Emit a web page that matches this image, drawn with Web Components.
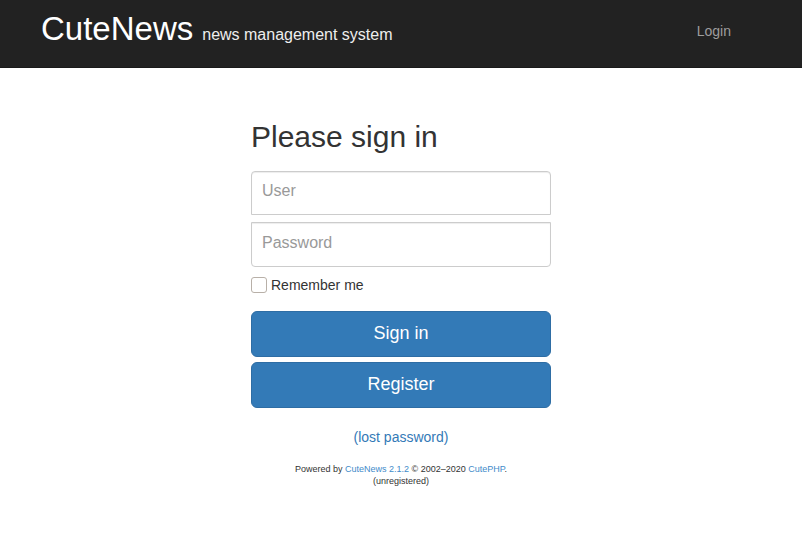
<!DOCTYPE html>
<html lang="en">
<head>
<meta charset="utf-8">
<title>CuteNews</title>
<style>
body { margin: 0; background: #fff; color: #333; font: 14px/20px "Liberation Sans", Arial, sans-serif; }
</style>
</head>
<body>
<site-header></site-header>
<main><sign-in-form></sign-in-form></main>
<site-footer></site-footer>
<script>
const define = (name, html) => customElements.define(name, class extends HTMLElement {
  constructor() {
    super();
    this.attachShadow({ mode: "open" }).innerHTML = html;
  }
});

define("site-header", `
<style>
  :host { display: block; background: #222; border-bottom: 1px solid #1a1a1a; }
  nav { display: flex; justify-content: space-between; align-items: flex-start; padding: 9px 71px 12px 41px; }
  .brand { display: flex; align-items: baseline; gap: 9px; color: #fff; text-decoration: none; font-size: 33px; line-height: 40px; }
  small { font-size: 16px; color: #eee; }
  .login { color: #9d9d9d; text-decoration: none; padding-top: 12px; }
</style>
<nav>
  <a class="brand" href="#">CuteNews <small>news management system</small></a>
  <a class="login" href="#">Login</a>
</nav>`);

define("sign-in-form", `
<style>
  :host { display: block; box-sizing: border-box; max-width: 330px; margin: 0 auto; padding: 52px 15px 0; }
  h2 { margin: 0 0 18px; font-size: 30px; line-height: 33px; font-weight: 500; }
  form { display: grid; }
  .field { box-sizing: border-box; width: 100%; height: 44px; padding: 7px 10px 11px; border: 1px solid #ccc; font: inherit; font-size: 16px; color: #555; background: #fff; box-shadow: inset 0 1px 1px rgba(0,0,0,.075); margin-bottom: 7px; outline: 0; }
  .field::placeholder { color: #999; opacity: 1; }
  .user { border-radius: 4px 4px 0 0; }
  .pass { border-radius: 0 0 4px 4px; height: 45px; margin-bottom: 8px; }
  label { display: flex; align-items: center; gap: 4px; margin-bottom: 16px; }
  input[type=checkbox] { appearance: none; box-sizing: border-box; width: 16px; height: 16px; margin: 0; border: 1px solid #b8b0a8; border-radius: 3px; background: #fff; }
  input[type=checkbox]:checked { background: #337ab7; }
  button { height: 46px; margin: 0 0 5px; padding: 0 16px 2px; border: 1px solid #2e6da4; border-radius: 6px; background: #337ab7; color: #fff; font: inherit; font-size: 18px; }
</style>
<form>
  <h2>Please sign in</h2>
  <input class="field user" type="text" placeholder="User" aria-label="User">
  <input class="field pass" type="password" placeholder="Password" aria-label="Password">
  <label><input type="checkbox">Remember me</label>
  <button type="button">Sign in</button>
  <button type="button">Register</button>
</form>`);

define("site-footer", `
<style>
  :host { display: block; text-align: center; padding-top: 14px; }
  a { color: #337ab7; text-decoration: none; }
  p { margin: 0; }
  .legal { margin-top: 16px; font-size: 9px; line-height: 12px; }
  .legal a { color: #428bca; }
</style>
<p><a href="#">(lost password)</a></p>
<p class="legal">Powered by <a href="#">CuteNews 2.1.2</a> © 2002–2020 <a href="#">CutePHP</a>.<br>(unregistered)</p>`);
</script>
</body>
</html>
